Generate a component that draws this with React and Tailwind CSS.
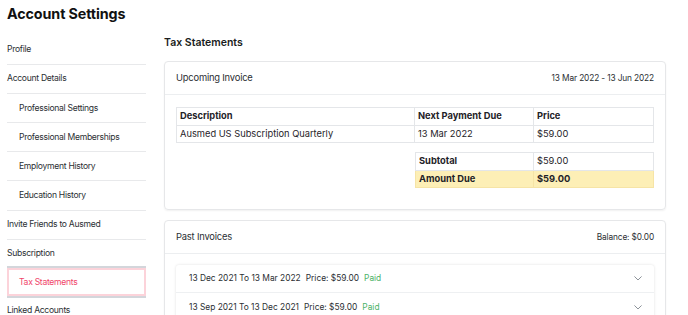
import React from "react";

const font = { fontFamily: "Inter, 'Noto Sans', sans-serif" };

function SideItem({ children, indent, last }) {
  return (
    <div
      className={`h-[29.2px] flex items-center text-[8.6px] tracking-[-0.3px] text-[#2b2f33] ${indent ? "pl-[12px]" : ""} ${last ? "" : "border-b border-[#e8e9eb]"}`}
    >
      {children}
    </div>
  );
}

function Chevron() {
  return (
    <svg width="8" height="5" viewBox="0 0 8 5" className="text-[#8d939a]">
      <polyline points="0.7,0.7 4,4 7.3,0.7" fill="none" stroke="currentColor" strokeWidth="1" strokeLinecap="round" strokeLinejoin="round" />
    </svg>
  );
}

export default function App() {
  return (
    <div className="w-[688px] h-[315px] overflow-hidden bg-white flex text-[#1f2328]" style={font}>
      <div className="w-[146px] shrink-0 pl-[7px]">
        <div className="h-[28px] flex items-center text-[14.3px] font-bold text-[#111] tracking-[-0.1px]">Account Settings</div>
        <div className="mt-[7.5px]">
          <SideItem>Profile</SideItem>
          <SideItem>Account Details</SideItem>
          <SideItem indent>Professional Settings</SideItem>
          <SideItem indent>Professional Memberships</SideItem>
          <SideItem indent>Employment History</SideItem>
          <SideItem indent>Education History</SideItem>
          <SideItem>Invite Friends to Ausmed</SideItem>
          <div className="h-[26.6px] flex items-center text-[8.6px] tracking-[-0.3px] text-[#2b2f33]">Subscription</div>
          <div className="border-y-2 border-[#d3d6db]">
            <div className="h-[28px] border-2 border-[#fcd3da] flex items-center pl-[10px] text-[8.6px] tracking-[-0.3px] text-[#f0456a]">
              Tax Statements
            </div>
          </div>
          <div className="h-[24px] flex items-center text-[8.6px] tracking-[-0.3px] text-[#2b2f33]">Linked Accounts</div>
        </div>
      </div>

      <div className="w-[502px] ml-[18px] shrink-0 pt-[33px]">
        <div className="h-[20px] flex items-center text-[10.5px] font-semibold text-[#1a1d21]">Tax Statements</div>

        <div className="mt-[8px] border border-[#e6e7e9] rounded-[4px] shadow-[0_1px_2px_rgba(0,0,0,0.06)]">
          <div className="h-[33px] border-b border-[#eceef0] flex items-center justify-between px-[11px]">
            <span className="text-[9.4px] tracking-[-0.2px] text-[#2b2f33]">Upcoming Invoice</span>
            <span className="text-[8.3px] tracking-[-0.12px] text-[#2b2f33]">13 Mar 2022 - 13 Jun 2022</span>
          </div>
          <div className="px-[11px] pt-[12px] pb-[21px]">
            <table className="w-[478px] border-collapse text-[9.3px] text-[#1f2328]">
              <tbody>
                <tr className="h-[17.5px]">
                  <td className="w-[238px] border border-[#e4e6e9] px-[3px] py-0 font-bold">Description</td>
                  <td className="w-[119px] border border-[#e4e6e9] px-[3px] py-0 font-bold">Next Payment Due</td>
                  <td className="border border-[#e4e6e9] px-[3px] py-0 font-bold">Price</td>
                </tr>
                <tr className="h-[17.5px]">
                  <td className="border border-[#e4e6e9] px-[3px] py-0">Ausmed US Subscription Quarterly</td>
                  <td className="border border-[#e4e6e9] px-[3px] py-0">13 Mar 2022</td>
                  <td className="border border-[#e4e6e9] px-[3px] py-0">$59.00</td>
                </tr>
              </tbody>
            </table>
            <table className="mt-[9px] ml-auto w-[239px] border-collapse text-[9.3px] text-[#1f2328]">
              <tbody>
                <tr className="h-[17.5px]">
                  <td className="w-[118px] border border-[#e4e6e9] px-[3px] py-0 font-bold">Subtotal</td>
                  <td className="border border-[#e4e6e9] px-[3px] py-0">$59.00</td>
                </tr>
                <tr className="h-[17.5px] bg-[#fdefb6]">
                  <td className="border border-[#f6e4a6] px-[3px] py-0 font-bold">Amount Due</td>
                  <td className="border border-[#f6e4a6] px-[3px] py-0 font-bold">$59.00</td>
                </tr>
              </tbody>
            </table>
          </div>
        </div>

        <div className="mt-[10px] border border-[#e6e7e9] rounded-[4px] shadow-[0_1px_2px_rgba(0,0,0,0.06)]">
          <div className="h-[33px] border-b border-[#eceef0] flex items-center justify-between px-[11px]">
            <span className="text-[9.4px] tracking-[-0.2px] text-[#2b2f33]">Past Invoices</span>
            <span className="text-[8.3px] tracking-[-0.12px] text-[#2b2f33]">Balance: $0.00</span>
          </div>
          <div className="px-[11px] pt-[11px] pb-[12px]">
            <div className="rounded-[3px] shadow-[0_0_3px_rgba(0,0,0,0.12)] bg-white">
              <div className="h-[28px] flex items-center justify-between pl-[13px] pr-[12px] border-b border-[#eef0f2] text-[8.4px] text-[#2b2f33]">
                <span>
                  13 Dec 2021 To 13 Mar 2022<span className="ml-[5px]">Price: $59.00</span>
                  <span className="ml-[5px] text-[#4cb267]">Paid</span>
                </span>
                <Chevron />
              </div>
              <div className="h-[28px] flex items-center justify-between pl-[13px] pr-[12px] text-[8.4px] text-[#2b2f33]">
                <span>
                  13 Sep 2021 To 13 Dec 2021<span className="ml-[5px]">Price: $59.00</span>
                  <span className="ml-[5px] text-[#4cb267]">Paid</span>
                </span>
                <Chevron />
              </div>
            </div>
          </div>
        </div>
      </div>
    </div>
  );
}
